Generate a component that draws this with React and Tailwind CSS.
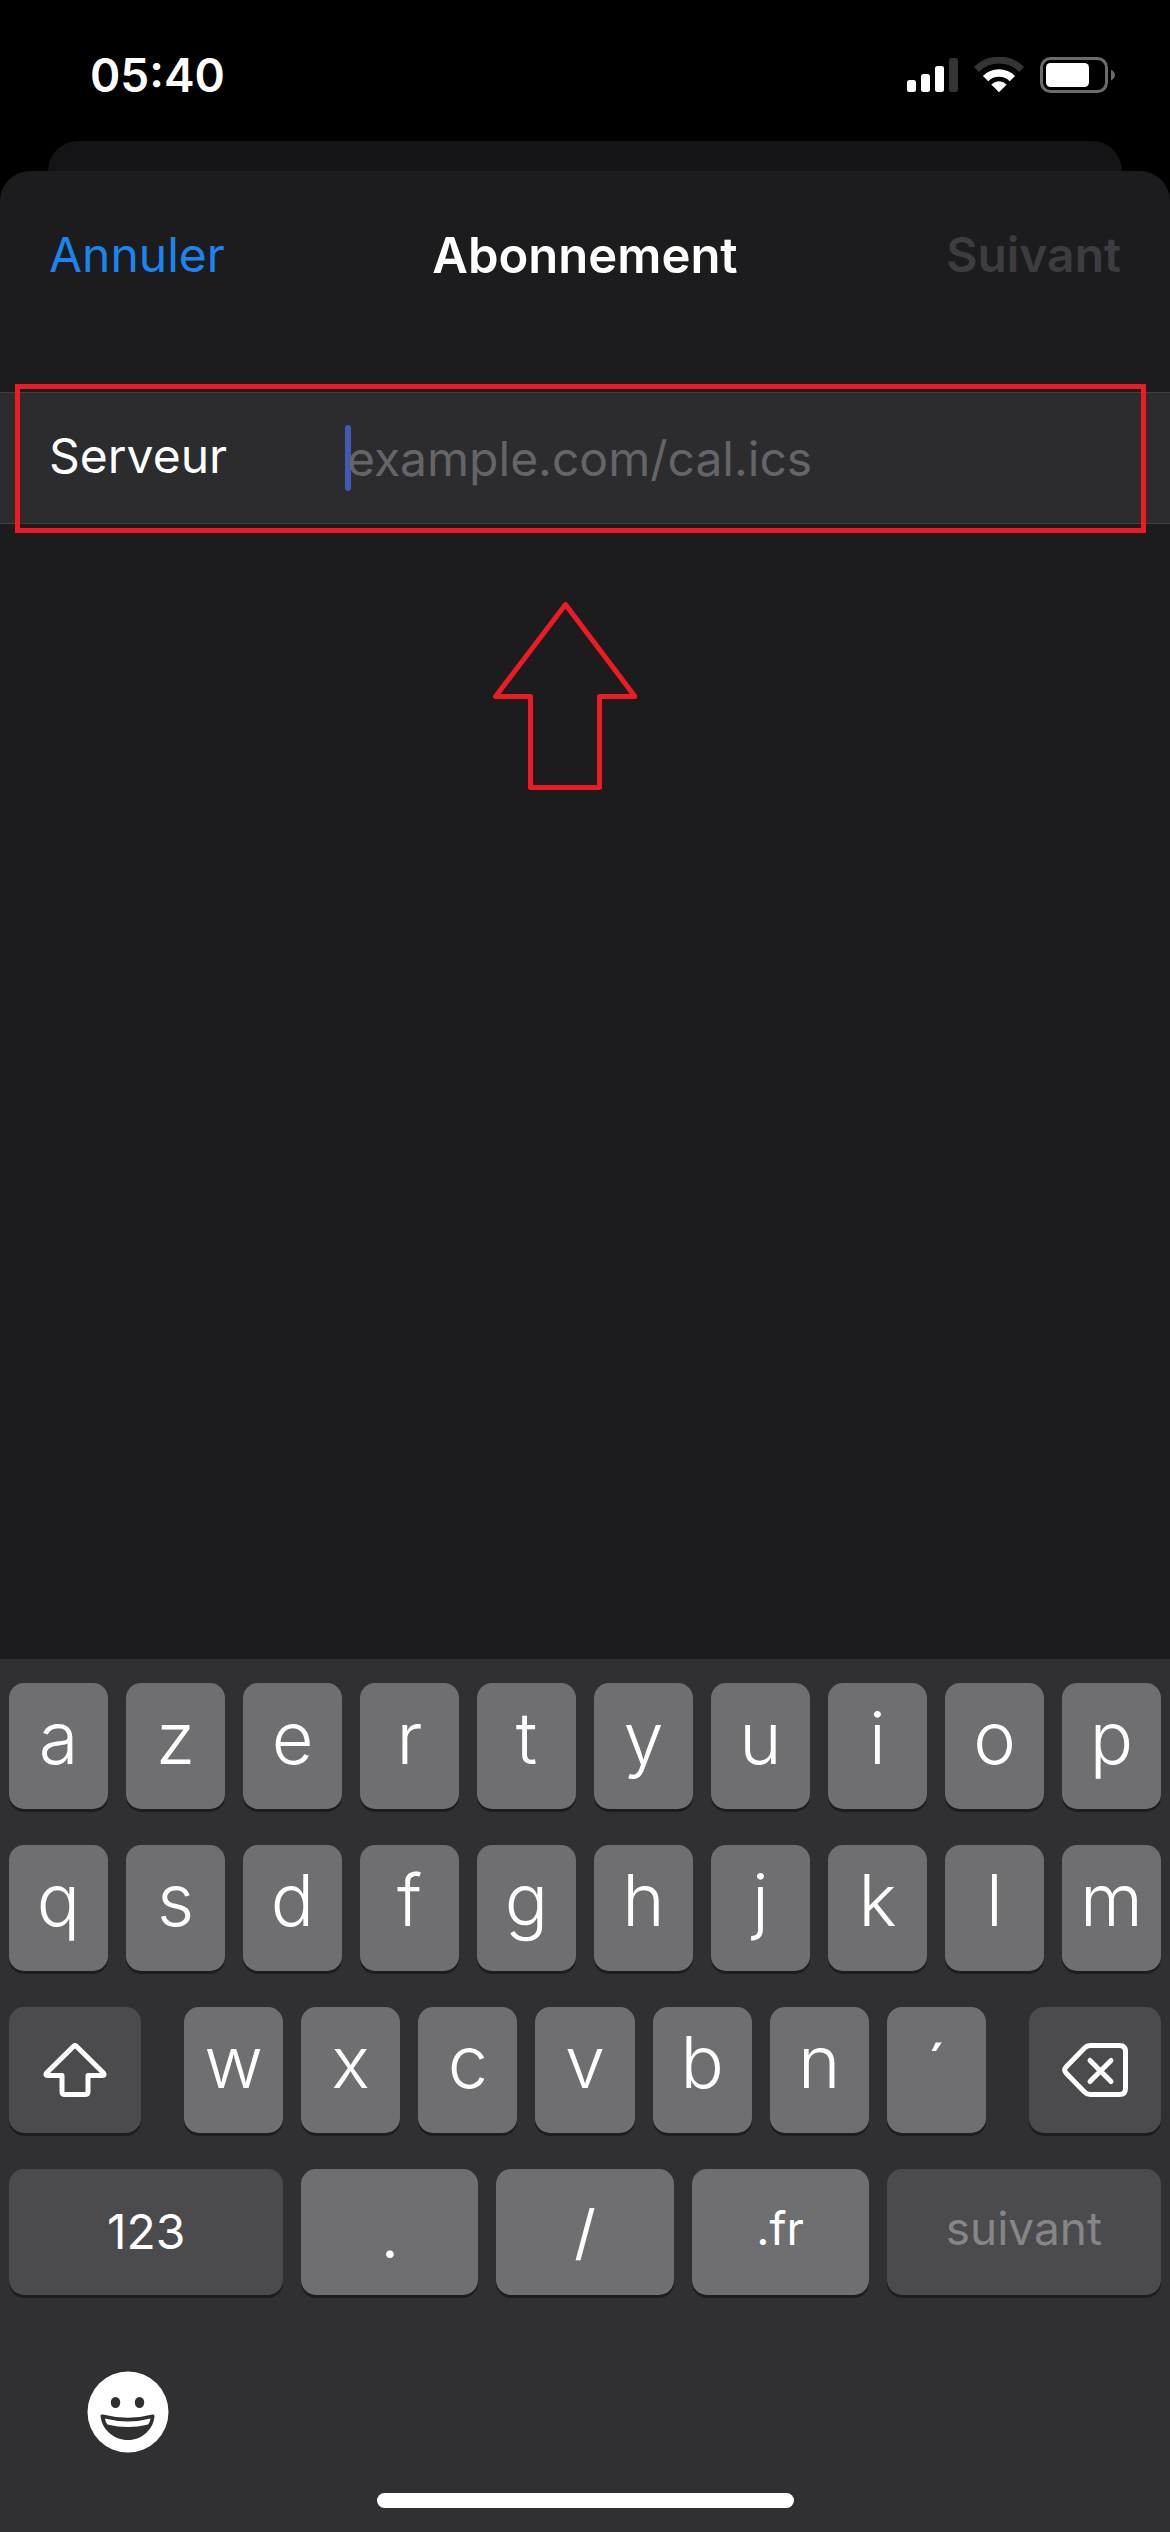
const rows = ["azertyuiop".split(""), "qsdfghjklm".split("")];
const thirdRow = ["w", "x", "c", "v", "b", "n", "´"];

function SignalIcon() {
  return (
    <svg width="51" height="36" viewBox="0 0 51 36" fill="#fff" aria-hidden="true">
      <rect x="0" y="23" width="9" height="12" rx="2.5" />
      <rect x="14" y="17" width="9" height="18" rx="2.5" />
      <rect x="28" y="9" width="9" height="26" rx="2.5" />
      <rect x="42" y="1" width="9" height="34" rx="2.5" fill="#343434" />
    </svg>
  );
}

function WifiIcon() {
  return (
    <svg width="50" height="36" viewBox="0 0 50 36" fill="none" aria-hidden="true">
      <path d="M2.400 12.400A32 32 0 0 1 47.600 12.400" stroke="#343434" strokeWidth="7" />
      <path d="M11.600 21.600A19 19 0 0 1 38.400 21.600" stroke="#fff" strokeWidth="7.500" />
      <path d="M25 35L17.600 27.600A10.500 10.500 0 0 1 32.400 27.600Z" fill="#fff" stroke="#fff" strokeWidth="0.500" strokeLinejoin="round" />
    </svg>
  );
}

function BatteryIcon() {
  return (
    <svg width="76" height="36" viewBox="0 0 76 36" fill="none" aria-hidden="true">
      <rect x="1.500" y="1.500" width="65" height="33" rx="9" stroke="#6b6b6b" strokeWidth="3" />
      <rect x="6" y="6" width="43" height="24" rx="4.500" fill="#fff" />
      <path d="M71 12.500Q75 15 75 18T71 23.500Z" fill="#6b6b6b" />
    </svg>
  );
}

function ShiftIcon() {
  return (
    <svg width="64" height="54" viewBox="0 0 64 54" fill="none" stroke="#fff" strokeWidth="5" strokeLinejoin="round" aria-hidden="true">
      <path d="M30.600 3.300Q32 2 33.400 3.300L60.500 30Q62 32.500 59.500 32.500H45V48.500Q45 51.500 42 51.500H22Q19 51.500 19 48.500V32.500H4.500Q2 32.500 3.500 30Z" />
    </svg>
  );
}

function DeleteIcon() {
  return (
    <svg width="66" height="54" viewBox="0 0 66 54" fill="none" stroke="#fff" strokeWidth="5" strokeLinejoin="round" strokeLinecap="round" aria-hidden="true">
      <path d="M28 2.500H57.500Q63.500 2.500 63.500 8.500V45.500Q63.500 51.500 57.500 51.500H28Q25 51.500 22.500 49L4 30Q1.500 27 4 24L22.500 5Q25 2.500 28 2.500Z" />
      <path d="M28 17.500L49 38.500M49 17.500L28 38.500" />
    </svg>
  );
}

function EmojiIcon() {
  return (
    <svg width="82" height="82" viewBox="0 0 82 82" aria-hidden="true">
      <circle cx="41" cy="41" r="40.500" fill="#fff" />
      <ellipse cx="28.500" cy="31.500" rx="4.700" ry="5.600" fill="#303032" />
      <ellipse cx="52.500" cy="31.500" rx="4.700" ry="5.600" fill="#303032" />
      <path d="M13.500 44.500Q14 43 16 43.500Q41 50 65.500 43.500Q67.500 43 67.500 45C66.500 58.500 55 69 41 69S14.500 58.500 13.500 44.500Z" fill="#303032" />
      <path d="M18 47.500Q41 53.500 63.500 47.500Q63 51.500 61 53.500Q41 58.500 20.500 53.500Q18.500 51.500 18 47.500Z" fill="#fff" />
    </svg>
  );
}

function Key({ tone = "light", size = "letter", className = "", children, ...rest }) {
  const tones = { light: "bg-[#6f6f71] text-white", dark: "bg-[#4b4b4d] text-white", muted: "bg-[#4b4b4d] text-[#868688]" };
  const sizes = {
    letter: "pb-4 text-[72px] font-[350]",
    accent: "pb-2 text-[60px] font-normal",
    dot: "text-[72px] font-[350]",
    slash: "text-[60px] font-normal",
    word: "pb-2 text-[46px] font-normal",
    number: "text-[48px] font-normal",
  };
  return (
    <button
      type="button"
      className={`flex h-[126px] min-w-0 items-center justify-center rounded-[15px] leading-none shadow-[0_3px_0_#1d1d1f] ${tones[tone]} ${sizes[size]} ${className}`}
      {...rest}
    >
      {children}
    </button>
  );
}

function Keyboard() {
  return (
    <section aria-label="Clavier" className="flex flex-col bg-[#303032] px-[9px] pt-6 pb-6">
      <div className="flex flex-col gap-9">
        {rows.map((row) => (
          <div key={row[0]} className="grid grid-cols-10 gap-[18px]">
            {row.map((letter) => (
              <Key key={letter}>{letter}</Key>
            ))}
          </div>
        ))}
        <div className="flex gap-[43px]">
          <Key tone="dark" size="number" className="flex-[132]" aria-label="Majuscule">
            <ShiftIcon />
          </Key>
          <div className="grid flex-[802] grid-cols-7 gap-[18px]">
            {thirdRow.map((letter) => (
              <Key key={letter} size={letter === "´" ? "accent" : "letter"}>{letter}</Key>
            ))}
          </div>
          <Key tone="dark" size="number" className="flex-[132]" aria-label="Effacer">
            <DeleteIcon />
          </Key>
        </div>
        <div className="flex gap-[18px]">
          <Key tone="dark" size="number" className="flex-[274]">123</Key>
          <Key size="dot" className="flex-[177]">.</Key>
          <Key size="slash" className="flex-[177]">/</Key>
          <Key size="word" className="flex-[177]">.fr</Key>
          <Key tone="muted" size="word" className="flex-[274]" disabled>suivant</Key>
        </div>
      </div>
      <div className="mt-[76px] px-[78px]">
        <button type="button" aria-label="Emoji" className="block">
          <EmojiIcon />
        </button>
      </div>
      <div className="mt-10 h-[15px] w-[417px] self-center rounded-full bg-white" />
    </section>
  );
}

export default function App() {
  return (
    <div className="flex min-h-screen flex-col bg-black font-['Inter',sans-serif] text-white">
      <header className="flex h-[141px] items-center justify-between pt-2 pr-[54px] pl-[90px]">
        <time className="text-[46px] leading-none font-semibold">05:40</time>
        <div className="flex items-center gap-4">
          <SignalIcon />
          <WifiIcon />
          <BatteryIcon />
        </div>
      </header>
      <div className="mx-12 h-[30px] rounded-t-[30px] bg-[#141416]" />
      <main className="flex grow flex-col rounded-t-[30px] bg-[#1c1c1e]">
        <nav className="grid h-[168px] grid-cols-3 items-center px-[49px] text-[48px] leading-none">
          <button type="button" className="justify-self-start text-[#1c84ee]">Annuler</button>
          <h1 className="justify-self-center text-[49px] font-semibold">Abonnement</h1>
          <button type="button" disabled className="justify-self-end font-semibold text-[#3d3d3f]">Suivant</button>
        </nav>
        <form className="relative mt-[53px] border-y border-[#404043] bg-[#2c2c2e] px-[49px]">
          <div className="flex h-[130px] items-center text-[48px] leading-none">
            <label htmlFor="server" className="w-[296px] shrink-0 pb-1">Serveur</label>
            <div className="h-[66px] w-[6px] shrink-0 rounded-full bg-[#4259b4]" />
            <input
              id="server"
              type="text"
              placeholder="example.com/cal.ics"
              className="-ml-1 h-[66px] min-w-0 grow bg-transparent outline-none placeholder:text-[#656569]"
            />
          </div>
          <div className="pointer-events-none absolute top-[-9px] right-6 bottom-[-10px] left-[15px] border-5 border-[#ed1c24]" />
        </form>
        <div className="mt-[78px] flex grow justify-center pr-[41px]">
          <svg width="144" height="188" viewBox="0 0 144 188" fill="none" stroke="#ed1c24" strokeWidth="5" strokeLinejoin="round" aria-hidden="true">
            <path d="M72.500 2.500L142 94.500H106.500V185.500H37.500V94.500H2.500Z" />
          </svg>
        </div>
      </main>
      <Keyboard />
    </div>
  );
}
